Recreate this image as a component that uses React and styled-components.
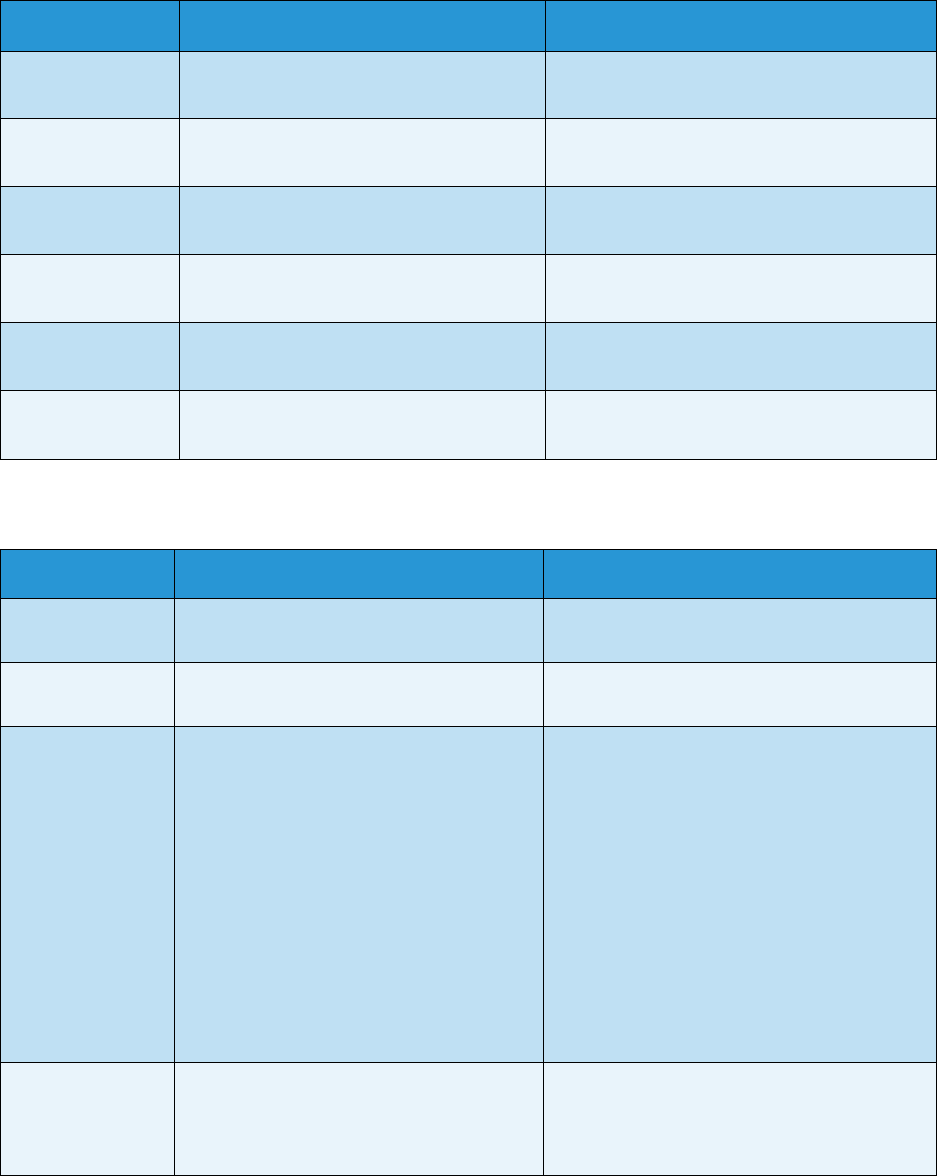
import React from "react";
import styled, { createGlobalStyle } from "styled-components";

const GlobalStyle = createGlobalStyle`
  html, body {
    margin: 0;
    padding: 0;
    background: #ffffff;
    font-family: "Liberation Sans", Arial, sans-serif;
  }
`;

const Page = styled.div`
  display: flex;
  flex-direction: column;
  gap: 89px;
  width: 937px;
`;

const Table = styled.div`
  display: flex;
  flex-direction: column;
  border-top: 1px solid #000;
  border-left: 1px solid #000;
  box-sizing: border-box;
  width: 937px;
`;

const Row = styled.div`
  display: grid;
  grid-template-columns: ${(p) => p.$cols};
  height: ${(p) => p.$h}px;
`;

const tones = {
  head: "#2896d5",
  dark: "#bfe0f3",
  light: "#e9f4fb",
};

const Cell = styled.div`
  box-sizing: border-box;
  border-right: 1px solid #000;
  border-bottom: 1px solid #000;
  background: ${(p) => tones[p.$tone]};
  color: #fff;
  font-size: 14px;
`;

const tableOne = {
  cols: "179px 366px 391px",
  rows: [
    { h: 51, tone: "head" },
    { h: 67, tone: "dark" },
    { h: 68, tone: "light" },
    { h: 68, tone: "dark" },
    { h: 68, tone: "light" },
    { h: 68, tone: "dark" },
    { h: 69, tone: "light" },
  ],
};

const tableTwo = {
  cols: "174px 369px 393px",
  rows: [
    { h: 49, tone: "head" },
    { h: 64, tone: "dark" },
    { h: 64, tone: "light" },
    { h: 336, tone: "dark" },
    { h: 113, tone: "light" },
  ],
};

function DataTable({ spec }) {
  return (
    <Table>
      {spec.rows.map((r, i) => (
        <Row key={i} $cols={spec.cols} $h={r.h}>
          {[0, 1, 2].map((c) => (
            <Cell key={c} $tone={r.tone} />
          ))}
        </Row>
      ))}
    </Table>
  );
}

export default function App() {
  return (
    <>
      <GlobalStyle />
      <Page>
        <DataTable spec={tableOne} />
        <DataTable spec={tableTwo} />
      </Page>
    </>
  );
}
